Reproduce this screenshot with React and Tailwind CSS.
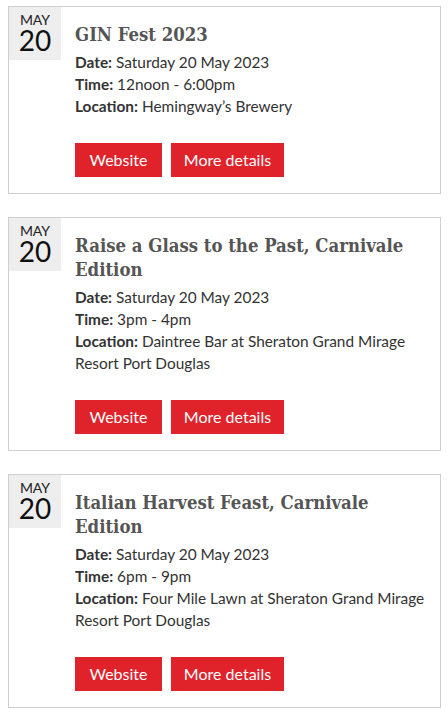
import React from "react";

const events = [
  {
    title: "GIN Fest 2023",
    time: "12noon - 6:00pm",
    location: "Hemingway’s Brewery",
  },
  {
    title: "Raise a Glass to the Past, Carnivale Edition",
    time: "3pm - 4pm",
    location: "Daintree Bar at Sheraton Grand Mirage Resort Port Douglas",
  },
  {
    title: "Italian Harvest Feast, Carnivale Edition",
    time: "6pm - 9pm",
    location: "Four Mile Lawn at Sheraton Grand Mirage Resort Port Douglas",
  },
];

function Card({ e }) {
  return (
    <div className="flex border border-[#cfcfcf] bg-white">
      <div className="w-[52px] h-[53px] shrink-0 bg-[#eeeeee] flex flex-col items-center pt-[6px]">
        <span className="text-[14px] leading-[14px] text-[#222]">MAY</span>
        <span className="text-[28px] leading-[26px] text-[#111]">20</span>
      </div>
      <div className="flex-1 pl-[14px] pr-[8px] pt-[16px] pb-[16px]">
        <h2 className="font-['DejaVu_Serif_Condensed','DejaVu_Serif',serif] font-bold text-[18.4px] leading-[24px] text-[#555]">
          {e.title}
        </h2>
        <div className="mt-[4px] text-[15.4px] leading-[22px] text-[#333]">
          <p>
            <span className="font-bold">Date:</span> Saturday 20 May 2023
          </p>
          <p>
            <span className="font-bold">Time:</span> {e.time}
          </p>
          <p>
            <span className="font-bold">Location:</span> {e.location}
          </p>
        </div>
        <div className="flex gap-[9px] mt-[26px]">
          <a className="h-[34px] w-[87px] bg-[#e0222b] text-white text-[16px] flex items-center justify-center">
            Website
          </a>
          <a className="h-[34px] w-[113px] bg-[#e0222b] text-white text-[16px] flex items-center justify-center">
            More details
          </a>
        </div>
      </div>
    </div>
  );
}

export default function App() {
  return (
    <div className="bg-white w-[448px] min-h-[714px] pl-[8px] pr-[7px] pt-[6px] flex flex-col gap-[23px] font-['Lato',sans-serif]">
      {events.map((e, i) => (
        <Card key={i} e={e} />
      ))}
    </div>
  );
}
